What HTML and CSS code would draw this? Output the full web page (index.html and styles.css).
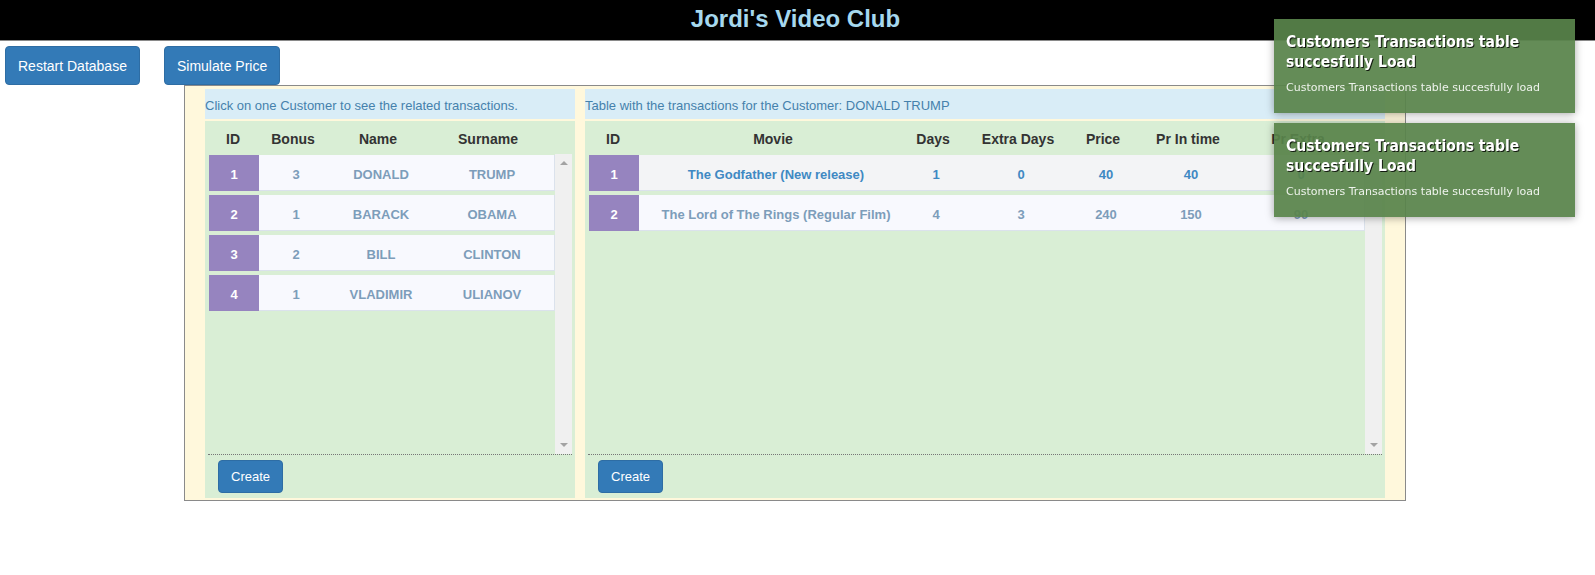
FILE: index.html
```html
<!DOCTYPE html>
<html lang="en">
<head>
<meta charset="utf-8">
<title>Jordi's Video Club</title>
<link rel="stylesheet" href="styles.css">
</head>
<body>
<header class="topbar"><h1>Jordi's Video Club</h1></header>

<div class="actions">
  <button class="btn">Restart Database</button>
  <button class="btn">Simulate Price</button>
</div>

<main class="board">
  <section class="panel panel-customers">
    <div class="panel-info">Click on one Customer to see the related transactions.</div>
    <div class="panel-body">
      <div class="thead cust-cols-h">
        <span>ID</span><span>Bonus</span><span>Name</span><span>Surname</span>
      </div>
      <div class="scroll">
        <div class="rows">
          <div class="row cust-cols"><span class="id">1</span><span>3</span><span>DONALD</span><span>TRUMP</span></div>
          <div class="row cust-cols"><span class="id">2</span><span>1</span><span>BARACK</span><span>OBAMA</span></div>
          <div class="row cust-cols"><span class="id">3</span><span>2</span><span>BILL</span><span>CLINTON</span></div>
          <div class="row cust-cols"><span class="id">4</span><span>1</span><span>VLADIMIR</span><span>ULIANOV</span></div>
        </div>
        <div class="vscroll"><span class="arrow up"></span><span class="arrow down"></span></div>
      </div>
      <div class="panel-foot"><button class="btn btn-create">Create</button></div>
    </div>
  </section>

  <section class="panel panel-trans">
    <div class="panel-info">Table with the transactions for the Customer: DONALD TRUMP</div>
    <div class="panel-body">
      <div class="thead trans-cols-h">
        <span>ID</span><span>Movie</span><span>Days</span><span>Extra Days</span><span>Price</span><span>Pr In time</span><span>Pr Extra</span>
      </div>
      <div class="scroll">
        <div class="rows">
          <div class="row trans-cols selected"><span class="id">1</span><span>The Godfather (New release)</span><span>1</span><span>0</span><span>40</span><span>40</span><span>0</span></div>
          <div class="row trans-cols"><span class="id">2</span><span>The Lord of The Rings (Regular Film)</span><span>4</span><span>3</span><span>240</span><span>150</span><span>90</span></div>
        </div>
        <div class="vscroll"><span class="arrow up"></span><span class="arrow down"></span></div>
      </div>
      <div class="panel-foot"><button class="btn btn-create">Create</button></div>
    </div>
  </section>
</main>

<div class="toasts">
  <div class="toast">
    <div class="toast-title">Customers Transactions table succesfully Load</div>
    <div class="toast-msg">Customers Transactions table succesfully load</div>
  </div>
  <div class="toast">
    <div class="toast-title">Customers Transactions table succesfully Load</div>
    <div class="toast-msg">Customers Transactions table succesfully load</div>
  </div>
</div>
</body>
</html>
```

FILE: styles.css
```css
* { box-sizing: border-box; }

body {
  margin: 0;
  font-family: "Liberation Sans", Arial, sans-serif;
  background: #fff;
  color: #333;
}

.topbar {
  height: 41px;
  background: #000;
  border-bottom: 1px solid #8a8a8a;
  padding-right: 4px;
}

.topbar h1 {
  margin: 0;
  font-size: 24px;
  font-weight: bold;
  line-height: 37px;
  text-align: center;
  color: #a6d8ee;
}

.actions {
  display: flex;
  gap: 24px;
  padding: 5px 0 0 5px;
  height: 44px;
}

.btn {
  font-family: "Liberation Sans", Arial, sans-serif;
  font-size: 14px;
  line-height: 20px;
  padding: 6px 12px;
  color: #fff;
  background: #337ab7;
  border: 1px solid #2e6da4;
  border-radius: 4px;
  cursor: pointer;
}

.board {
  margin-left: 184px;
  width: 1222px;
  height: 416px;
  border: 1px solid #8a8a8a;
  background: #fff8dc;
  padding: 3px 20px 2px 20px;
  display: flex;
  gap: 10px;
}

.panel {
  display: flex;
  flex-direction: column;
  gap: 2px;
}
.panel-customers { width: 370px; }
.panel-trans { width: 800px; }

.panel-info {
  height: 30px;
  padding-top: 2px;
  line-height: 29px;
  background: #d9edf7;
  color: #4581ac;
  font-size: 13px;
  white-space: nowrap;
}

.panel-body {
  flex: 1;
  background: #d9eed5;
  display: flex;
  flex-direction: column;
}

.thead {
  height: 33px;
  padding: 3px 0 0 4px;
  line-height: 30px;
  font-size: 14px;
  font-weight: bold;
  color: #333;
  display: grid;
  text-align: center;
}

.cust-cols-h { grid-template-columns: 48px 72px 98px 122px; }
.cust-cols { grid-template-columns: 50px 74px 96px 1fr; }
.trans-cols-h { grid-template-columns: 48px 272px 48px 122px 48px 122px 98px; }
.trans-cols { grid-template-columns: 50px 274px 46px 124px 46px 124px 96px 1fr; }

.scroll {
  height: 301px;
  margin: 0 3px;
  border-bottom: 1px dotted #777;
  display: flex;
}

.rows {
  flex: 1;
  padding: 1px 0 0 1px;
  display: flex;
  flex-direction: column;
  gap: 4px;
}

.row {
  display: grid;
  height: 36px;
  background: #f8f9fe;
  box-shadow: inset 0 -1px 0 #dbe2ec, inset -1px 0 0 #dbe2ec;
  font-size: 13px;
  font-weight: bold;
  color: #7d9dba;
  text-align: center;
}
.row > span { padding-top: 3px; line-height: 33px; }
.row .id {
  background: #9684bf;
  color: #fff;
  height: 36px;
}

.row.selected {
  background: #f3f4f6;
  color: #3f89c3;
}

.vscroll {
  width: 17px;
  background: #f0f0f0;
  position: relative;
}
.arrow {
  position: absolute;
  left: 5px;
  width: 0;
  height: 0;
  border-left: 4px solid transparent;
  border-right: 4px solid transparent;
}
.arrow.up { top: 7px; border-bottom: 4px solid #a3a3a3; }
.arrow.down { bottom: 7px; border-top: 4px solid #a3a3a3; }

.panel-foot {
  padding: 5px 0 0 13px;
}

.btn-create {
  font-size: 13px;
  line-height: 19px;
  padding: 6px 12px;
  height: 33px;
}

.toasts {
  position: fixed;
  top: 19px;
  right: 20px;
  width: 301px;
  display: flex;
  flex-direction: column;
  gap: 10px;
}

.toast {
  height: 94px;
  padding: 13px 12px 0 12px;
  background: rgba(88, 131, 74, 0.93);
  box-shadow: 0 1px 8px rgba(0, 0, 0, 0.35);
  font-family: "DejaVu Sans", Verdana, sans-serif;
  color: #fff;
}

.toast-title {
  font-family: "DejaVu Sans Condensed", "DejaVu Sans", Tahoma, sans-serif;
  font-size: 15.5px;
  font-weight: bold;
  line-height: 20px;
  text-shadow: 1px 1px 0 #141c11;
}

.toast-msg {
  margin-top: 9px;
  font-size: 11px;
  line-height: 14px;
  color: #eef3ec;
}
```
